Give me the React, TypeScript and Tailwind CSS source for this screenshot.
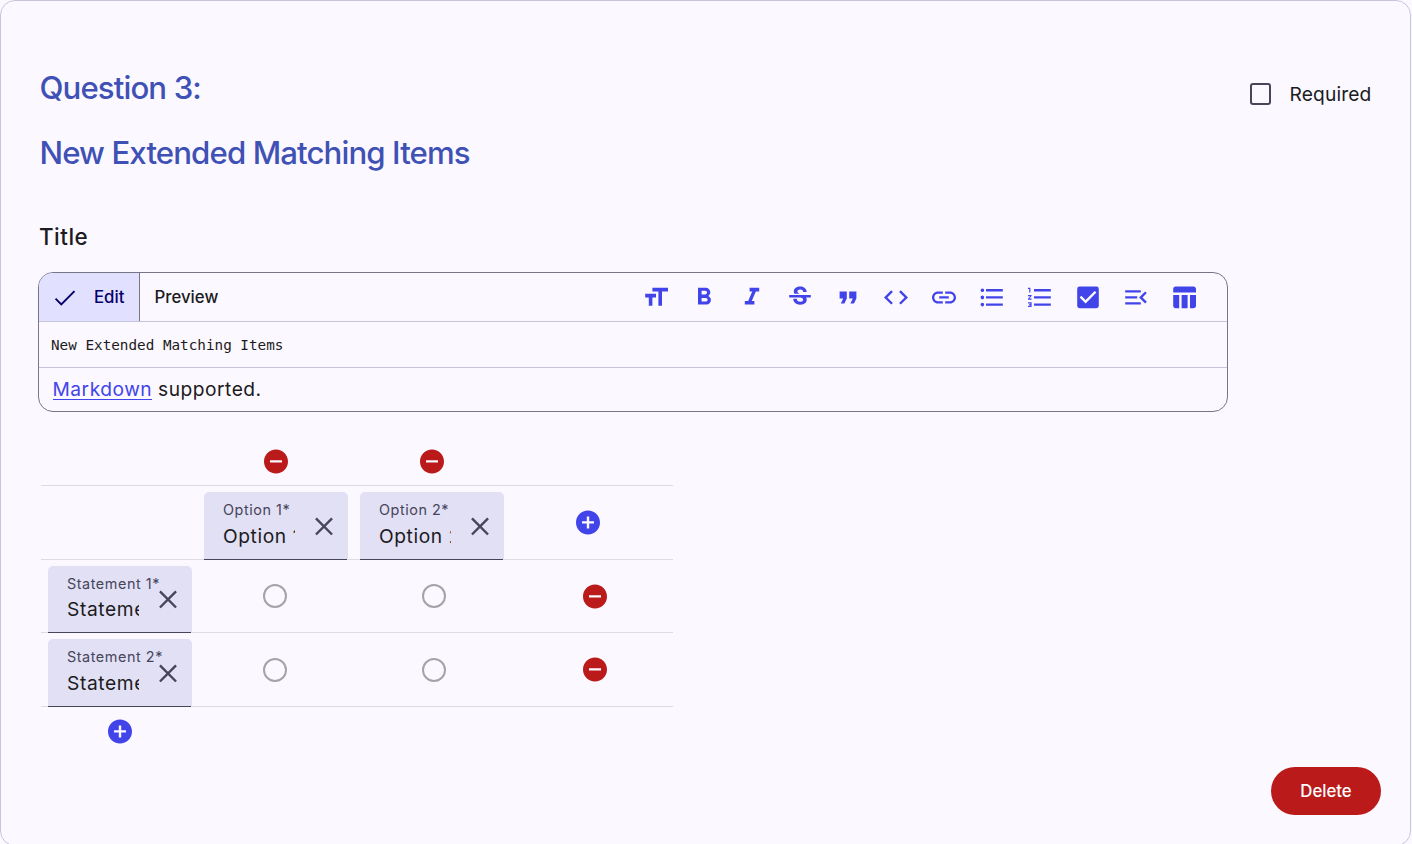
import type { ReactNode } from "react";
import {
  MdAddCircle,
  MdCheckBox,
  MdCode,
  MdFormatBold,
  MdFormatItalic,
  MdFormatListBulleted,
  MdFormatListNumbered,
  MdFormatQuote,
  MdFormatSize,
  MdLink,
  MdMenuOpen,
  MdRemoveCircle,
  MdStrikethroughS,
  MdTableChart,
} from "react-icons/md";

const ICON_BOX = "-0.5 -0.85 25 25";

const tools = [
  MdFormatSize,
  MdFormatBold,
  MdFormatItalic,
  MdStrikethroughS,
  MdFormatQuote,
  MdCode,
  MdLink,
  MdFormatListBulleted,
  MdFormatListNumbered,
  MdCheckBox,
  MdMenuOpen,
  MdTableChart,
];

const statements = [
  { name: "Statement 1", row: "h-[73px]", field: "h-[67px]", gap: "mt-[2px]", close: "mt-[18px]", radio: "mt-[18px]" },
  { name: "Statement 2", row: "h-[74px]", field: "h-[68px]", gap: "mt-[3px]", close: "mt-[19px]", radio: "mt-[19px]" },
];

function RemoveButton() {
  return (
    <button className="flex text-[#ba1a1a]" aria-label="Remove">
      <MdRemoveCircle viewBox={ICON_BOX} className="size-[30px]" />
    </button>
  );
}

function AddButton() {
  return (
    <button className="flex text-[#4145e9]" aria-label="Add">
      <MdAddCircle viewBox={ICON_BOX} className="size-[30px]" />
    </button>
  );
}

function Radio() {
  return <span className="block size-6 rounded-full border-2 border-[#a5a2aa]" />;
}

type FieldProps = { label: string; value: string; height?: string; gap?: string; close?: string };

function Field({ label, value, height = "h-[68px]", gap = "mt-[3px]", close = "mt-[19px]" }: FieldProps) {
  return (
    <div className={`flex w-36 shrink-0 flex-col rounded-t-[5px] bg-[#e2e0f5] ${height}`}>
      <div className="flex flex-1 pl-[19px]">
        <div className="flex w-[73px] flex-col pt-[8px]">
          <span className="text-[14.4px] leading-[19px] tracking-[0.55px] whitespace-nowrap text-[#46455a]">{label}</span>
          <span className={`w-[72px] overflow-hidden text-[19.2px] leading-[29px] tracking-[0.6px] whitespace-nowrap ${gap}`}>
            {value}
          </span>
        </div>
        <svg className={`ml-[13px] size-[30px] shrink-0 ${close}`} viewBox="-0.5 -0.9 25 25" fill="none" stroke="#46455a" strokeWidth="2">
          <path d="M5.3 5.3 18.7 18.7M18.7 5.3 5.3 18.7" />
        </svg>
      </div>
      <div className="h-px w-[143px] bg-[#46455a]" />
    </div>
  );
}

function Row({ height, children }: { height: string; children: ReactNode }) {
  return <div className={`flex w-[632px] border-b border-[#dedbe2] ${height}`}>{children}</div>;
}

export default function App() {
  return (
    <div className="h-[844px] overflow-hidden bg-[#fcf8ff] font-['Inter',sans-serif] text-[#1b1b21]">
      <div className="flex h-[846px] w-[1411px] flex-col rounded-[15px] border border-[#c7c5dc] bg-[#fcf8ff]">
        <header className="flex h-[207px] justify-between pt-[66px] pr-[38.5px] pl-[38.5px]">
          <div className="text-[31.2px] leading-[43px] font-medium tracking-[-0.9px] text-[#3f51b5]">
            <h2>Question 3:</h2>
            <h2 className="mt-[22px]">New Extended Matching Items</h2>
          </div>
          <label className="mt-[13px] flex h-7 items-center text-[19.2px] tracking-[0.15px]">
            <span className="mr-[18px] h-[22px] w-[21px] rounded-[3px] border-2 border-[#46455a]" />
            Required
          </label>
        </header>
        <h3 className="ml-[38px] h-[64px] pt-[14px] text-[22.4px] leading-[30px] font-medium tracking-[0.5px]">Title</h3>

        <section className="ml-[37px] flex h-[140px] w-[1190px] shrink-0 flex-col overflow-hidden rounded-[15px] border border-[#777588]">
          <div className="flex h-[49px] shrink-0 border-b border-[#c7c5dc] text-[16.8px] font-medium">
            <div className="flex w-[101px] items-center border-r border-[#777588] bg-[#e1e0ff] pl-[15px] text-[#07006c]">
              <svg className="mt-[2px] size-[21.6px]" viewBox="0 0 24 24" fill="none" stroke="currentColor" strokeWidth="2.2">
                <path d="M1.73 12.91 8.1 19.28 22.79 4.59" />
              </svg>
              <span className="mt-[2px] ml-[18.4px]">Edit</span>
            </div>
            <div className="flex items-center pt-[2px] pl-[14.5px]">Preview</div>
            <div className="mr-[19px] ml-auto flex items-center text-[#4145e9]">
              {tools.map((Icon, i) => (
                <button key={i} className="flex size-12 items-center justify-center">
                  <Icon viewBox={ICON_BOX} className="size-[30px]" />
                </button>
              ))}
            </div>
          </div>
          <div className="flex h-[46px] shrink-0 items-center border-b border-[#c7c5dc] pt-[2px] pl-[12px] font-['DejaVu_Sans_Mono',monospace] text-[14.3px]">
            New Extended Matching Items
          </div>
          <p className="pt-[7px] pl-[13.5px] text-[19.2px] leading-[28px] tracking-[0.5px]">
            <a className="inline-block h-[25px] border-b border-[#4145e9] text-[#4145e9]">Markdown</a> supported.
          </p>
        </section>

        <section className="ml-[40px] w-[632px]">
          <Row height="h-[74px]">
            <div className="flex w-full pt-[34px] pl-[220px]">
              <RemoveButton />
              <span className="w-[126px]" />
              <RemoveButton />
            </div>
          </Row>
          <Row height="h-[74px]">
            <div className="flex w-full pt-[6px] pl-[163px]">
              <Field label="Option 1*" value="Option 1" />
              <span className="w-3" />
              <Field label="Option 2*" value="Option 2" />
              <div className="mt-[15px] ml-[69px]">
                <AddButton />
              </div>
            </div>
          </Row>
          {statements.map((s) => (
            <Row key={s.name} height={s.row}>
              <div className="flex w-full pt-[6px] pl-[7px]">
                <Field label={`${s.name}*`} value={s.name} height={s.field} gap={s.gap} close={s.close} />
                <div className={`ml-[71px] ${s.radio}`}>
                  <Radio />
                </div>
                <div className={`ml-[135px] ${s.radio}`}>
                  <Radio />
                </div>
                <div className="mt-[15px] ml-[134px]">
                  <RemoveButton />
                </div>
              </div>
            </Row>
          ))}
          <div className="pt-[9px] pl-[64px]">
            <AddButton />
          </div>
        </section>

        <footer className="mt-[21px] flex justify-end pr-[29px]">
          <button className="h-12 w-[110px] rounded-full bg-[#ba1a1a] pt-[2px] text-[16.8px] font-medium text-white">Delete</button>
        </footer>
      </div>
    </div>
  );
}
